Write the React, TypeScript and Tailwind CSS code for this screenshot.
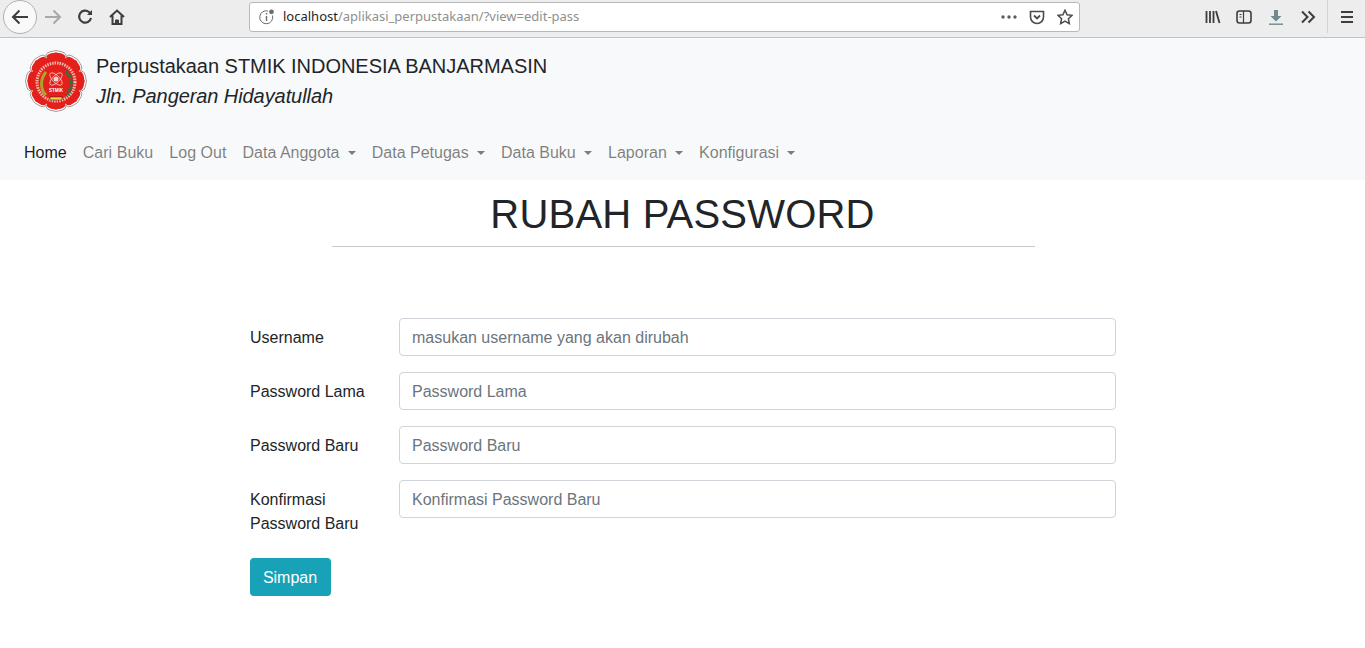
const navLinks = ["Cari Buku", "Log Out"];
const dropdowns = ["Data Anggota", "Data Petugas", "Data Buku", "Laporan", "Konfigurasi"];
const fields = [
  { label: "Username", placeholder: "masukan username yang akan dirubah" },
  { label: "Password Lama", placeholder: "Password Lama" },
  { label: "Password Baru", placeholder: "Password Baru" },
  { label: "Konfirmasi Password Baru", placeholder: "Konfirmasi Password Baru" },
];

// eight round petals around the badge, each with a small point in the middle
const petalPath = (tip: number, valley: number) => {
  const at = (deg: number, r: number) => {
    const a = ((deg - 90) * Math.PI) / 180;
    return `${(31 + r * Math.cos(a)).toFixed(1)} ${(31 + r * Math.sin(a)).toFixed(1)}`;
  };
  let d = `M${at(-22.5, valley)}`;
  for (let i = 0; i < 8; i++) {
    const c = i * 45;
    d += `C${at(c - 20, tip + 1)} ${at(c - 7, tip - 1)} ${at(c, tip)}`;
    d += `C${at(c + 7, tip - 1)} ${at(c + 20, tip + 1)} ${at(c + 22.5, valley)}`;
  }
  return d + "z";
};

const Logo = () => (
  <svg width="62" height="62" viewBox="0 0 62 62" className="shrink-0">
    <path d={petalPath(30.5, 26)} fill="#fff" stroke="#8a7a74" strokeWidth="0.8" />
    <path d={petalPath(28.8, 24.5)} fill="#e3201c" />
    <circle cx="31" cy="32" r="19" fill="none" stroke="#f2b9a8" strokeWidth="3" strokeDasharray="1.5 1" />
    <path d="M21 22c-6 7-6 17 0 23" fill="none" stroke="#a9a52c" strokeWidth="3" />
    <path d="M41 21c7 7 7 18 0 25" fill="none" stroke="#1d7a4a" strokeWidth="3.5" strokeDasharray="2 1" />
    <circle cx="31" cy="29" r="2.5" fill="#f4d6cc" />
    <ellipse cx="31" cy="29" rx="8" ry="3.5" fill="none" stroke="#f4d6cc" strokeWidth="0.8" transform="rotate(45 31 29)" />
    <ellipse cx="31" cy="29" rx="8" ry="3.5" fill="none" stroke="#f4d6cc" strokeWidth="0.8" transform="rotate(-45 31 29)" />
    <text x="31" y="42" textAnchor="middle" fontSize="4.5" fontWeight="700" fill="#fff">
      STMIK
    </text>
    <rect x="25" y="47" width="12" height="3" fill="#e8d33a" stroke="#222" strokeWidth="0.5" />
  </svg>
);

const BrowserBar = () => (
  <div className="flex h-[38px] items-center border-b border-[#c4c4c4] bg-[#ededed] pb-[4px] text-[#3d3d40]">
    <div className="ml-[3px] flex h-[34px] w-[34px] shrink-0 items-center justify-center rounded-full border border-[#b1b1b1] bg-[#f9f9f9]">
      <svg width="18" height="16" viewBox="0 0 18 16" fill="none" stroke="#3d3d40" strokeWidth="2">
        <path d="M17 8H2M8.5 1.5 2 8l6.5 6.5" />
      </svg>
    </div>
    <svg width="18" height="16" viewBox="0 0 18 16" fill="none" stroke="#a8a8a8" strokeWidth="2" className="ml-[7px]">
      <path d="M1 8h15M9.5 1.5 16 8l-6.5 6.5" />
    </svg>
    <svg width="16" height="16" viewBox="0 0 16 16" fill="none" stroke="#3d3d40" strokeWidth="2.2" className="ml-[15px]">
      <path d="M14 9a6 6 0 1 1-2-6l2 2" />
      <path d="M15 1v5h-5z" fill="#3d3d40" stroke="none" />
    </svg>
    <svg width="16" height="16" viewBox="0 0 16 16" fill="none" stroke="#3d3d40" strokeWidth="2" className="ml-[16px]">
      <path d="M1 8 8 1.5 15 8M3.5 6.5V15h9V6.5" />
      <path d="M6.5 15v-4h3v4" fill="#3d3d40" strokeWidth="1" />
    </svg>
    <div className="ml-[124px] flex h-[30px] w-[831px] shrink-0 items-center rounded-[3px] border border-[#b9b9b9] bg-white pl-[9px] pr-[6px]">
      <svg width="16" height="16" viewBox="0 0 16 16" fill="none" stroke="#6b6b6b" className="shrink-0">
        <path d="M13.5 6.5A6.5 6.5 0 1 1 9 2" />
        <path d="M7.5 7v5M7.5 4v1.5" strokeWidth="1.4" />
        <circle cx="12.5" cy="2.8" r="2.4" fill="#6b6b6b" stroke="none" />
      </svg>
      <span className="ml-[8px] font-['Noto_Sans',sans-serif] text-[13px] leading-none whitespace-nowrap text-[#8f8f8f]">
        <span className="text-[#1f1f1f]">localhost</span>/aplikasi_perpustakaan/?view=edit-pass
      </span>
      <div className="ml-auto flex items-center">
        <svg width="16" height="4" viewBox="0 0 16 4" fill="#5c5c5f">
          <circle cx="2" cy="2" r="1.7" />
          <circle cx="8" cy="2" r="1.7" />
          <circle cx="14" cy="2" r="1.7" />
        </svg>
        <svg width="16" height="16" viewBox="0 0 16 16" fill="none" stroke="#4a4a4f" strokeWidth="1.6" className="ml-[12px]">
          <path d="M1.5 2.5h13V8a6.5 6.5 0 0 1-13 0z" />
          <path d="m5 6.5 3 3 3-3" strokeWidth="1.8" />
        </svg>
        <svg width="16" height="16" viewBox="0 0 16 16" fill="none" stroke="#4a4a4f" strokeWidth="1.5" className="ml-[12px]">
          <path d="m8 1.2 2.1 4.5 4.9.6-3.6 3.4.9 4.9L8 12.2l-4.3 2.4.9-4.9L1 6.3l4.9-.6z" />
        </svg>
      </div>
    </div>
    <svg width="16" height="16" viewBox="0 0 16 16" fill="none" stroke="#3d3d40" strokeWidth="1.8" className="ml-[125px]">
      <path d="M1.5 2v12M5 2v12M8.5 2v12M11 2l3.5 12" />
    </svg>
    <svg width="16" height="14" viewBox="0 0 16 14" fill="none" stroke="#3d3d40" strokeWidth="1.6" className="ml-[15px]">
      <rect x="1" y="1" width="14" height="12" rx="2.5" />
      <path d="M7.5 1v12M3.5 4.5h2M3.5 7h2" strokeWidth="1.2" />
    </svg>
    <svg width="16" height="16" viewBox="0 0 16 16" className="ml-[16px]">
      <path d="M6 1h4v6h3.5L8 12.5 2.5 7H6z" fill="#6e8a8c" />
      <rect x="1" y="14.5" width="14" height="1.4" fill="#6e8a8c" />
    </svg>
    <svg width="16" height="14" viewBox="0 0 16 14" fill="none" stroke="#3d3d40" strokeWidth="2" className="ml-[16px]">
      <path d="m2 1.5 5.5 5.5L2 12.5M8.5 1.5 14 7l-5.5 5.5" />
    </svg>
    <div className="ml-[11px] h-[33px] w-px self-start bg-[#d4d4d4]" />
    <svg width="14" height="12" viewBox="0 0 14 12" fill="#3d3d40" className="ml-[12px]">
      <rect x="1" y="0" width="12" height="2" />
      <rect x="1" y="5" width="12" height="2" />
      <rect x="1" y="10" width="12" height="2" />
    </svg>
  </div>
);

const Navbar = () => (
  <nav className="bg-[#f8f9fa] px-4 pt-2 pb-[7px]">
    <div className="flex h-[78px] items-start pl-[9px]">
      <div className="mt-[4px]">
        <Logo />
      </div>
      <div className="ml-[9px] pt-[5px] text-xl leading-[30px] text-[#212529]">
        <div className="tracking-[-0.03px]">Perpustakaan STMIK INDONESIA BANJARMASIN</div>
        <div className="tracking-[-0.08px] italic">Jln. Pangeran Hidayatullah</div>
      </div>
    </div>
    <div className="mt-[9px] flex">
      <a className="p-2 text-black/90">Home</a>
      {navLinks.map((item) => (
        <a key={item} className="p-2 tracking-[0.04px] text-black/50">
          {item}
        </a>
      ))}
      {dropdowns.map((item) => (
        <a key={item} className="flex items-center p-2 text-black/50">
          {item}
          <span className="ml-[8.3px] h-0 w-0 border-x-[4.8px] border-t-[4.8px] border-x-transparent border-t-black/50" />
        </a>
      ))}
    </div>
  </nav>
);

export default function App() {
  return (
    <div className="min-h-[648px] bg-white font-['Liberation_Sans',Arial,sans-serif] text-base leading-6 text-[#212529]">
      <BrowserBar />
      <Navbar />
      <div className="ml-[332px] w-[703px] border-b border-[#c9c9c9] pt-[4px] pb-[2px] text-center">
        <h1 className="pr-[2px] text-[40px] leading-[60px] font-normal tracking-[0.2px]">RUBAH PASSWORD</h1>
      </div>
      <form className="mt-[71px] ml-[250px] w-[866px]">
        {fields.map((field) => (
          <div key={field.label} className="mb-4 flex">
            <label className="w-[134px] shrink-0 pt-[8px] pb-[6px] pr-[15px]">{field.label}</label>
            <div className="ml-[15px] flex-1">
              <input
                placeholder={field.placeholder}
                className="h-[38px] w-full rounded border border-[#ced4da] bg-white px-3 pt-[2px] text-base text-[#495057] placeholder:text-[#6c757d]"
              />
            </div>
          </div>
        ))}
        <button type="button" className="h-[38px] w-[81px] rounded bg-[#17a2b8] pt-[2px] pr-[1px] text-base text-white">
          Simpan
        </button>
      </form>
    </div>
  );
}
